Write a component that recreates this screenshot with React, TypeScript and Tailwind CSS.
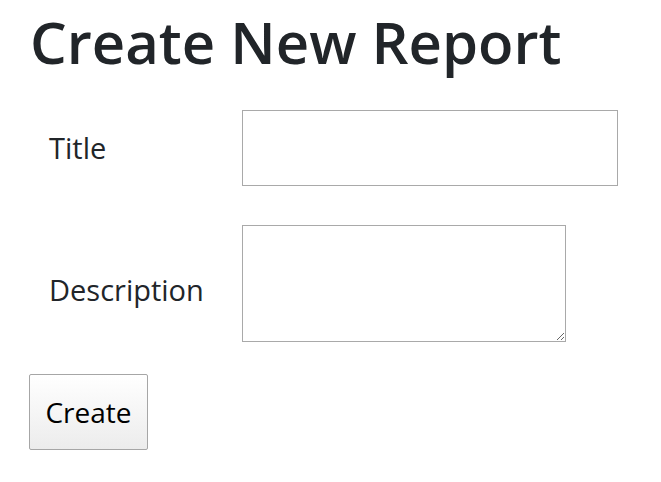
export default function App() {
  return (
    <div className="min-h-screen bg-white px-[29px] text-[#212529]" style={{ fontFamily: '"Open Sans", "Noto Sans", sans-serif' }}>
      <h1 className="ml-px pt-[6px] text-[58px] font-semibold leading-[72px]">Create New Report</h1>
      <form className="mt-[32px]">
        <div className="flex items-center">
          <label className="w-[213px] pl-[20px] text-[29px] leading-[42px]">Title</label>
          <input className="h-[76px] w-[376px] border border-[#a9a9a9] bg-white px-2 text-[28px] outline-none" />
        </div>
        <div className="mt-[39px] flex items-center">
          <label className="w-[213px] pl-[20px] pt-[13px] text-[29px] leading-[42px]">Description</label>
          <textarea className="block h-[117px] w-[324px] border border-[#a9a9a9] bg-white p-1 text-[28px] outline-none" />
        </div>
        <button
          type="button"
          className="mt-[32px] h-[76px] w-[119px] rounded-[2px] border border-[#a6a6a6] bg-gradient-to-b from-white to-[#ececec] text-[28px] text-black"
        >
          Create
        </button>
      </form>
    </div>
  );
}
